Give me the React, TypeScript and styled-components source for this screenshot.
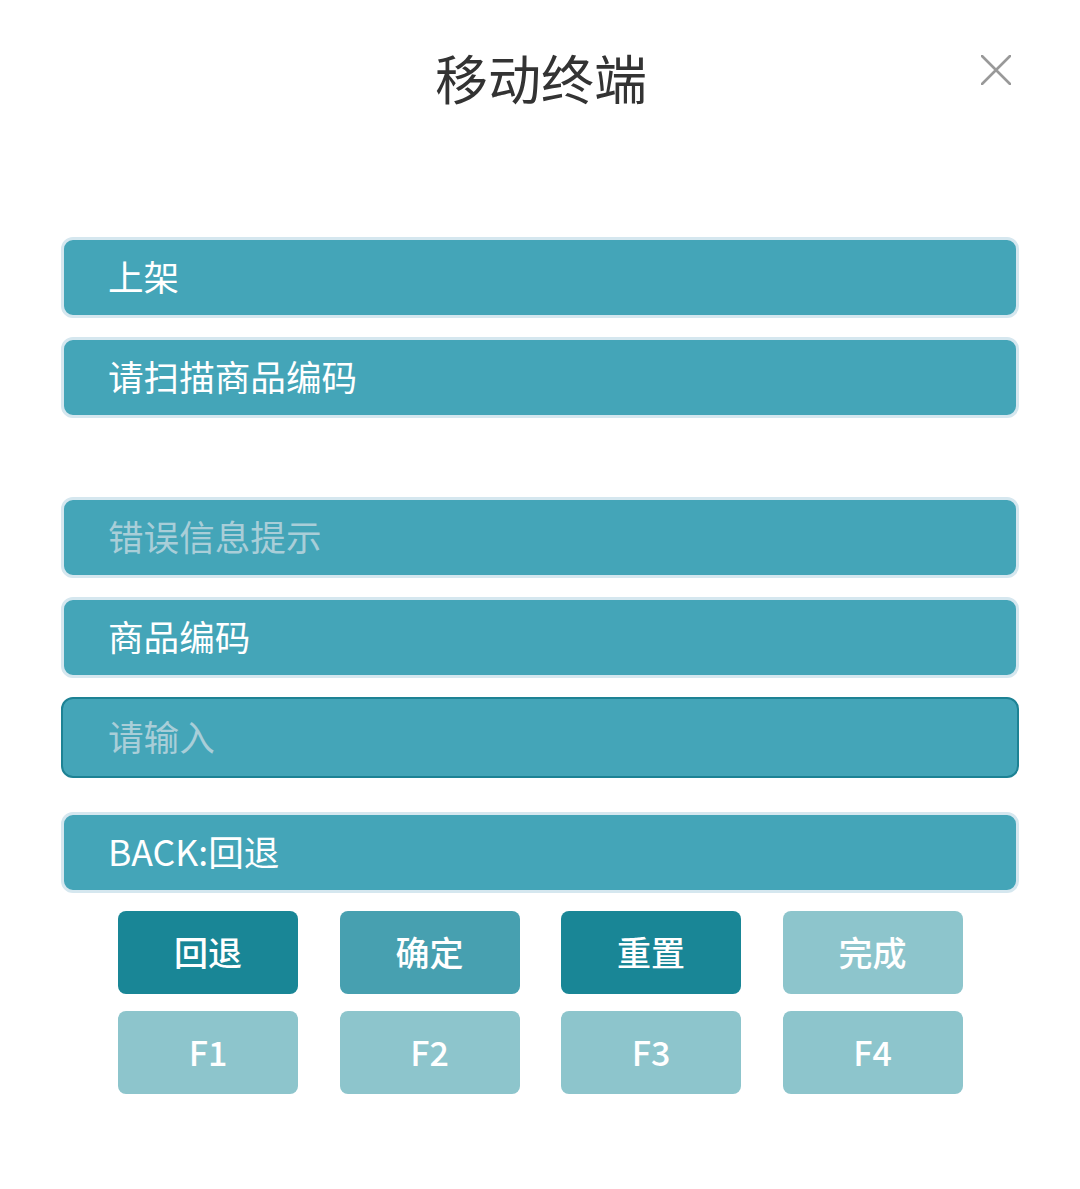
import React from "react";
import styled, { createGlobalStyle } from "styled-components";

const Global = createGlobalStyle`
  html, body { margin: 0; padding: 0; background: #ffffff; }
  body { font-family: "Noto Sans CJK SC", "Noto Sans", sans-serif; }
  * { box-sizing: border-box; }
`;

const Page = styled.div`
  width: 1080px;
  min-height: 1189px;
  background: #ffffff;
  display: flex;
  flex-direction: column;
`;

const Header = styled.header`
  display: grid;
  grid-template-columns: 1fr auto 1fr;
  align-items: center;
  padding: 40px 68px 0 70px;
  height: 114px;
`;

const Title = styled.h1`
  grid-column: 2;
  margin: 0;
  font-size: 53px;
  line-height: 72px;
  font-weight: 400;
  color: #333333;
  letter-spacing: 0;
`;

const Close = styled.button`
  grid-column: 3;
  justify-self: end;
  align-self: start;
  margin-top: 14px;
  width: 32px;
  height: 32px;
  padding: 0;
  border: none;
  background: transparent;
  display: flex;
  align-items: center;
  justify-content: center;
`;

const Fields = styled.section`
  display: flex;
  flex-direction: column;
  padding: 0 61px;
  margin-top: 123px;
`;

const Field = styled.div<{ $gapTop?: number; $variant?: "plain" | "input" }>`
  height: 81px;
  margin-top: ${(p) => p.$gapTop ?? 0}px;
  border-radius: 12px;
  background: #44a5b8;
  border: ${(p) => (p.$variant === "input" ? "2px solid #1d8294" : "3px solid #d5e7ef")};
  display: flex;
  align-items: center;
  padding-left: ${(p) => (p.$variant === "input" ? 45 : 44)}px;
  padding-bottom: 3px;
`;

const FieldText = styled.span<{ $muted?: boolean }>`
  font-size: 35.6px;
  line-height: 1;
  color: ${(p) => (p.$muted ? "#a9ced8" : "#ffffff")};
  font-weight: 400;
`;

const Buttons = styled.section`
  display: grid;
  grid-template-columns: repeat(4, 180px);
  column-gap: 41.5px;
  row-gap: 17px;
  padding: 0 118px;
  margin-top: 18px;
`;

const Key = styled.button<{ $tone: "dark" | "mid" | "light" }>`
  height: 83px;
  border: none;
  border-radius: 8px;
  background: ${(p) =>
    p.$tone === "dark" ? "#198696" : p.$tone === "mid" ? "#47a0b0" : "#8dc5cc"};
  color: #ffffff;
  font-family: "Noto Sans CJK SC", "Noto Sans", sans-serif;
  font-size: 34px;
  font-weight: 500;
  display: flex;
  align-items: center;
  justify-content: center;
  padding: 0 0 2px 0;
`;

const keys: { label: string; tone: "dark" | "mid" | "light" }[] = [
  { label: "回退", tone: "dark" },
  { label: "确定", tone: "mid" },
  { label: "重置", tone: "dark" },
  { label: "完成", tone: "light" },
  { label: "F1", tone: "light" },
  { label: "F2", tone: "light" },
  { label: "F3", tone: "light" },
  { label: "F4", tone: "light" },
];

export default function App() {
  return (
    <Page>
      <Global />
      <Header>
        <Title>移动终端</Title>
        <Close aria-label="close">
          <svg width="30" height="30" viewBox="0 0 30 30">
            <path d="M1 1 L29 29 M29 1 L1 29" stroke="#999999" strokeWidth="2.6" strokeLinecap="round" />
          </svg>
        </Close>
      </Header>
      <Fields>
        <Field>
          <FieldText>上架</FieldText>
        </Field>
        <Field $gapTop={19}>
          <FieldText>请扫描商品编码</FieldText>
        </Field>
        <Field $gapTop={79}>
          <FieldText $muted>错误信息提示</FieldText>
        </Field>
        <Field $gapTop={19}>
          <FieldText>商品编码</FieldText>
        </Field>
        <Field $gapTop={19} $variant="input">
          <FieldText $muted>请输入</FieldText>
        </Field>
        <Field $gapTop={34}>
          <FieldText>BACK:回退</FieldText>
        </Field>
      </Fields>
      <Buttons>
        {keys.map((k) => (
          <Key key={k.label} $tone={k.tone}>
            {k.label}
          </Key>
        ))}
      </Buttons>
    </Page>
  );
}
